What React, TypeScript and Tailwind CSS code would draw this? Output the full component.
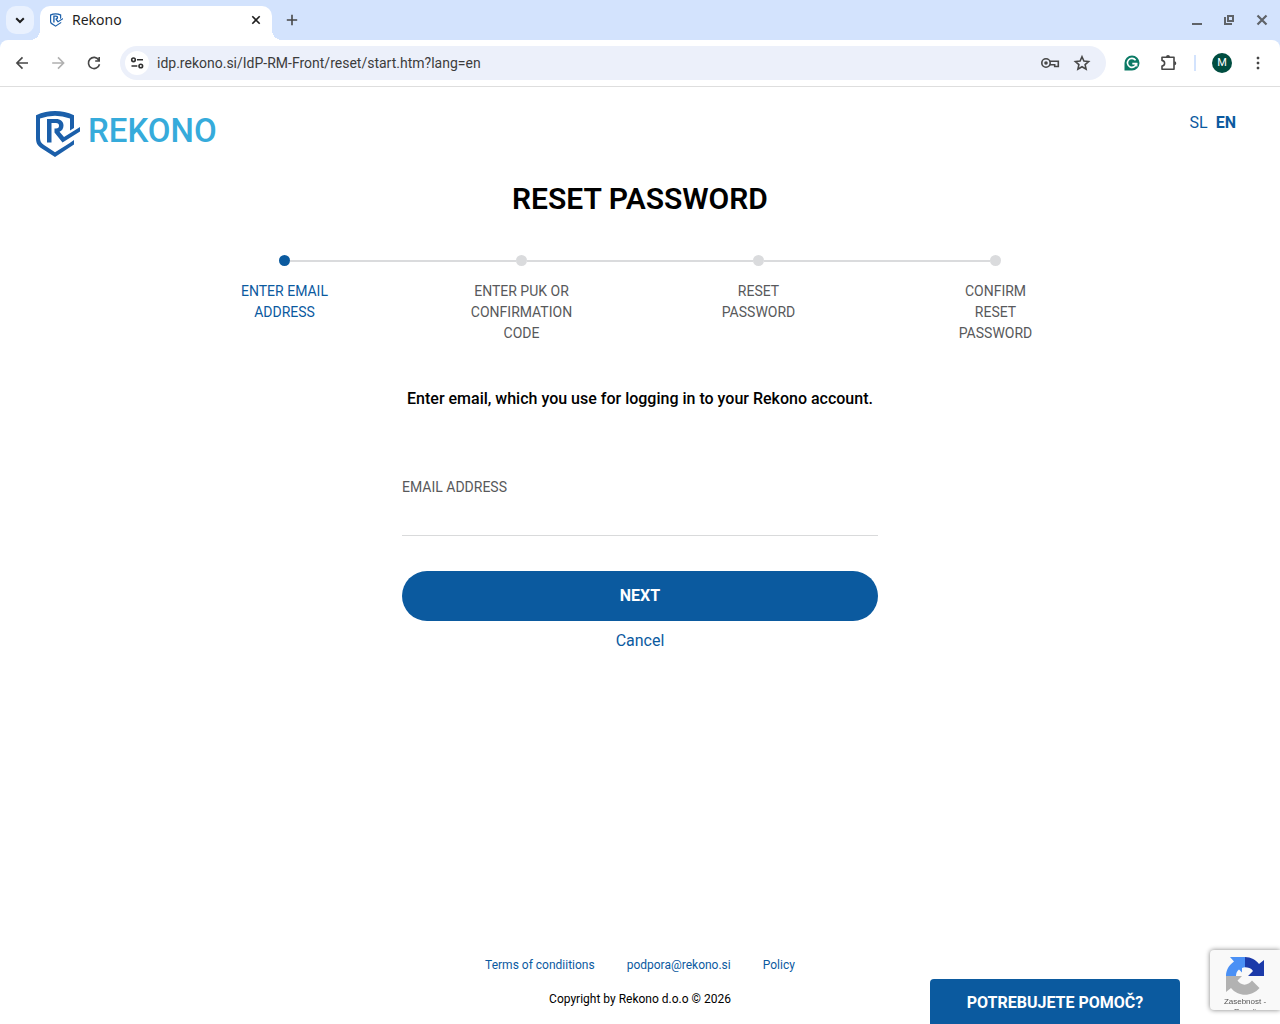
import { useState } from "react";
import type { ReactNode } from "react";
import clsx from "clsx";

const steps = [
  "Enter email address",
  "Enter PUK or confirmation code",
  "Reset password",
  "Confirm reset password",
];

const Shield = ({ className }: { className: string }) => (
  <svg viewBox="0 0 44 46" className={className} fill="currentColor" aria-hidden="true">
    <path d="M0 4.200Q19-4 38 4.200V17L34 19.500V7.500Q19 2 4 7.500V27C4 30 5 32 8 34L19 41.200L33 32.500L38 29V33.500L19 46L5 37C1.500 34.500 0 32 0 27Z" />
    <path d="M11 8H20C24.500 8 27.500 10.500 27.500 14.500C27.500 17.500 26 19.800 23.500 20.800L28 26L44 16V20.500L26.500 31.500L18.500 21.500V17.500H20C22 17.500 23 16.500 23 14.800C23 13 22 12 20 12H15.500V31.500H11Z" />
  </svg>
);

const ToolIcon = ({ children, className }: { children: ReactNode; className?: string }) => (
  <svg
    viewBox="0 0 20 20"
    className={clsx("size-5 shrink-0", className)}
    fill="none"
    stroke="currentColor"
    strokeWidth="1.6"
    aria-hidden="true"
  >
    {children}
  </svg>
);

const TabStrip = () => (
  <div className="flex h-10 items-end bg-[#d3e3fd] pl-1.5">
    <button
      aria-label="Search tabs"
      className="mb-1.5 flex size-7 items-center justify-center rounded-[10px] bg-[#e9f1fe] text-[#1f1f1f]"
    >
      <ToolIcon>
        <path d="M6.200 8.200L10 12L13.800 8.200" strokeWidth="2" />
      </ToolIcon>
    </button>
    <div className="relative ml-1.5 flex h-[34px] w-[232px] items-center rounded-t-[10px] bg-white pr-1.5 pb-1.5 pl-2.5 before:absolute before:bottom-0 before:-left-2.5 before:size-2.5 before:bg-[radial-gradient(circle_at_0_0,transparent_10px,white_10px)] after:absolute after:-right-2.5 after:bottom-0 after:size-2.5 after:bg-[radial-gradient(circle_at_100%_0,transparent_10px,white_10px)]">
      <Shield className="h-3.5 w-[13px] text-[#1b5faa]" />
      <span className="ml-[9px] text-sm text-[#1f1f1f]">Rekono</span>
      <button aria-label="Close tab" className="ml-auto text-[#1f1f1f]">
        <ToolIcon>
          <path d="M6.300 6.300L13.700 13.700M13.700 6.300L6.300 13.700" />
        </ToolIcon>
      </button>
    </div>
    <button aria-label="New tab" className="mb-2.5 ml-2.5 text-[#474747]">
      <ToolIcon>
        <path d="M10 4.800V15.200M4.800 10H15.200" />
      </ToolIcon>
    </button>
    <div className="mb-2.5 ml-auto flex gap-3 pr-2 text-[#5f6368]">
      <button aria-label="Minimize">
        <ToolIcon>
          <path d="M4 14H14" strokeWidth="2" />
        </ToolIcon>
      </button>
      <button aria-label="Restore">
        <ToolIcon>
          <path d="M8 6H13V11H8ZM5 7V14H12" strokeWidth="2" />
        </ToolIcon>
      </button>
      <button aria-label="Close window">
        <ToolIcon>
          <path d="M5.500 5.500L14.500 14.500M14.500 5.500L5.500 14.500" strokeWidth="2.200" />
        </ToolIcon>
      </button>
    </div>
  </div>
);

const Toolbar = () => (
  <div className="bg-[#d3e3fd]">
    <div className="flex h-[47px] items-center rounded-t-lg border-b border-[#dedede] bg-white px-3 text-[#474747]">
      <button aria-label="Back">
        <ToolIcon>
          <path d="M16 10H5.500M10.500 4.400L4.900 10L10.500 15.600" />
        </ToolIcon>
      </button>
      <button aria-label="Forward" className="ml-4 text-[#b0b0b0]">
        <ToolIcon>
          <path d="M4.200 10H15M10 4.400L15.600 10L10 15.600" />
        </ToolIcon>
      </button>
      <button aria-label="Reload" className="ml-4">
        <ToolIcon>
          <path d="M14.800 7A5.600 5.600 0 1 0 15.500 11.300M15.200 4V8H11.200" />
        </ToolIcon>
      </button>
      <div className="ml-4 flex h-[34px] flex-1 items-center rounded-full bg-[#ecf0fa] pr-3.5 pl-[5px]">
        <button
          aria-label="Site information"
          className="flex size-6 items-center justify-center rounded-full bg-white text-[#303030]"
        >
          <ToolIcon>
            <circle cx="6.500" cy="6.800" r="1.800" />
            <circle cx="13.800" cy="13" r="1.800" />
            <path d="M10 6.800H16M4.500 13H10.300" />
          </ToolIcon>
        </button>
        <input
          aria-label="Address"
          className="ml-2 min-w-0 flex-1 bg-transparent font-['Roboto',sans-serif] text-sm text-[#3c3c3c] outline-none"
          defaultValue="idp.rekono.si/IdP-RM-Front/reset/start.htm?lang=en"
        />
        <button aria-label="Passwords" className="mr-3">
          <ToolIcon>
            <circle cx="6" cy="10" r="4.200" />
            <circle cx="6" cy="10" r="1" fill="currentColor" />
            <path d="M9.800 8.200H18.300V13.500H14.700V11.800H9.800" />
          </ToolIcon>
        </button>
        <button aria-label="Bookmark this tab">
          <ToolIcon>
            <path d="M10 3.700L11.900 8L16.600 8.500L13.100 11.600L14.100 16.200L10 13.800L5.900 16.200L6.900 11.600L3.400 8.500L8.100 8Z" />
          </ToolIcon>
        </button>
      </div>
      <button aria-label="Grammarly" className="ml-4 text-[#0b7a65]">
        <ToolIcon>
          <path d="M2.500 17.500V10A7.500 7.500 0 1 1 10 17.500Z" fill="currentColor" stroke="none" />
          <path d="M13.600 7.200A4.500 4.500 0 1 0 14.400 10.600H10.300" stroke="white" />
          <path d="M11.500 10.600H14.800V13.600" stroke="white" strokeWidth="1.200" />
        </ToolIcon>
      </button>
      <button aria-label="Extensions" className="ml-4">
        <ToolIcon>
          <path d="M4 4.200H16V16.200H4V13C7.500 12.500 7.500 7.900 4 7.400Z" strokeLinejoin="round" />
          <path d="M8 4A2 2 0 0 1 12 4ZM16.300 8.200A2 2 0 0 1 16.300 12.200Z" fill="currentColor" stroke="none" />
        </ToolIcon>
      </button>
      <span className="ml-4 h-4 w-0.5 bg-[#d3e3fd]" />
      <button
        aria-label="Profile"
        className="ml-4 flex size-5 items-center justify-center rounded-full bg-[#004d40] font-['Roboto',sans-serif] text-[11px] text-white"
      >
        M
      </button>
      <button aria-label="Menu" className="ml-4">
        <ToolIcon>
          <path d="M9 4H11V6H9ZM9 9H11V11H9ZM9 14H11V16H9Z" fill="currentColor" strokeWidth="0.500" />
        </ToolIcon>
      </button>
    </div>
  </div>
);

const StepList = ({ current }: { current: number }) => (
  <ol className="mx-auto mt-[38px] grid w-full max-w-[948px] grid-cols-4">
    {steps.map((step, i) => (
      <li
        key={step}
        className={clsx(
          "flex flex-col items-center text-center text-sm leading-[21px] uppercase",
          i === current ? "text-[#0b5a9f]" : "text-[#58595b]"
        )}
      >
        <div className="flex w-full items-center">
          <span className={clsx("h-0.5 flex-1", i > 0 && "bg-[#dadbdd]")} />
          <span
            className={clsx(
              "size-[11px] rounded-full",
              i === current ? "bg-[#0b5a9f]" : "bg-[#dadbdd]"
            )}
          />
          <span className={clsx("h-0.5 flex-1", i < steps.length - 1 && "bg-[#dadbdd]")} />
        </div>
        <span className="mt-[15px] w-[104px]">{step}</span>
      </li>
    ))}
  </ol>
);

const ResetForm = () => {
  const [email, setEmail] = useState("");

  return (
    <form
      className="mx-auto mt-[43px] flex w-full max-w-[476px] flex-col"
      onSubmit={(e) => e.preventDefault()}
    >
      <p className="text-center text-base font-medium">
        Enter email, which you use for logging in to your Rekono account.
      </p>
      <label htmlFor="email" className="mt-[66px] text-sm text-[#58595b] uppercase">
        Email address
      </label>
      <input
        id="email"
        type="email"
        value={email}
        onChange={(e) => setEmail(e.target.value)}
        className="h-[39px] border-b border-[#d9dadb] bg-transparent outline-none"
      />
      <button
        type="submit"
        className="mt-[35px] h-[50px] rounded-full bg-[#0b5a9f] text-base font-bold text-white uppercase"
      >
        Next
      </button>
      <a href="#" className="mt-2 self-center text-base text-[#0b5a9f]">
        Cancel
      </a>
    </form>
  );
};

const RecaptchaBadge = () => (
  <div className="fixed right-0 bottom-3.5 flex h-[60px] w-[70px] flex-col items-center overflow-hidden rounded-l-sm bg-[#f9f9f9] pt-[7px] shadow-[0_0_5px_gray]">
    <svg viewBox="0 0 38 38" className="size-[38px] shrink-0" aria-hidden="true">
      <path d="M19 0H4L8 4.500C3 8 0 13 0 19H10C10 16 11 14 13 12.500L16 15.500V11C17 10.500 18 10.300 19 10.300Z" fill="#4a90f5" />
      <path d="M19 0C25 0 30 3 33 7L38 3V19H22L27 14C25 11 22 10.300 19 10.300Z" fill="#1c3aa9" />
      <path d="M0 19V35L5 31C12 40 26 40 33.500 31L26 23.500C22 29 15 29 11.500 23.500L16 19Z" fill="#b2b2b2" />
    </svg>
    <p className="mt-0.5 text-center font-['Liberation_Sans',sans-serif] text-[8px] leading-[10px] text-[#555555]">
      Zasebnost -
      <br />
      Pogoji
    </p>
  </div>
);

export default function App() {
  return (
    <div className="flex min-h-screen flex-col bg-white font-['Roboto',sans-serif] text-black">
      <div className="font-['Noto_Sans',sans-serif]">
        <TabStrip />
        <Toolbar />
      </div>

      <header className="flex items-start justify-between px-9 pt-6">
        <a href="#" className="flex items-center gap-2 text-[#1b5faa]">
          <Shield className="h-[46px] w-11" />
          <span className="-mt-1.5 text-[33px] leading-[38px] font-medium text-[#36abdb]">REKONO</span>
        </a>
        <nav className="flex gap-2 pr-2 text-base text-[#0b5a9f]">
          <a href="#">SL</a>
          <a href="#" className="font-bold">
            EN
          </a>
        </nav>
      </header>

      <main className="px-6 pb-10">
        <h1 className="mt-6 text-center text-[30px] leading-9 font-semibold uppercase">
          Reset password
        </h1>
        <StepList current={0} />
        <ResetForm />
      </main>

      <footer className="mt-auto pb-[17px] text-center text-xs">
        <nav className="flex justify-center gap-8 text-[#0b5a9f]">
          <a href="#">Terms of condiitions</a>
          <a href="#">podpora@rekono.si</a>
          <a href="#">Policy</a>
        </nav>
        <p className="mt-[18px]">Copyright by Rekono d.o.o © 2026</p>
      </footer>

      <button className="fixed right-[100px] bottom-0 h-[45px] w-[250px] rounded-t bg-[#0b5a9f] pt-0.5 text-base font-bold text-white">
        POTREBUJETE POMOČ?
      </button>
      <RecaptchaBadge />
    </div>
  );
}
